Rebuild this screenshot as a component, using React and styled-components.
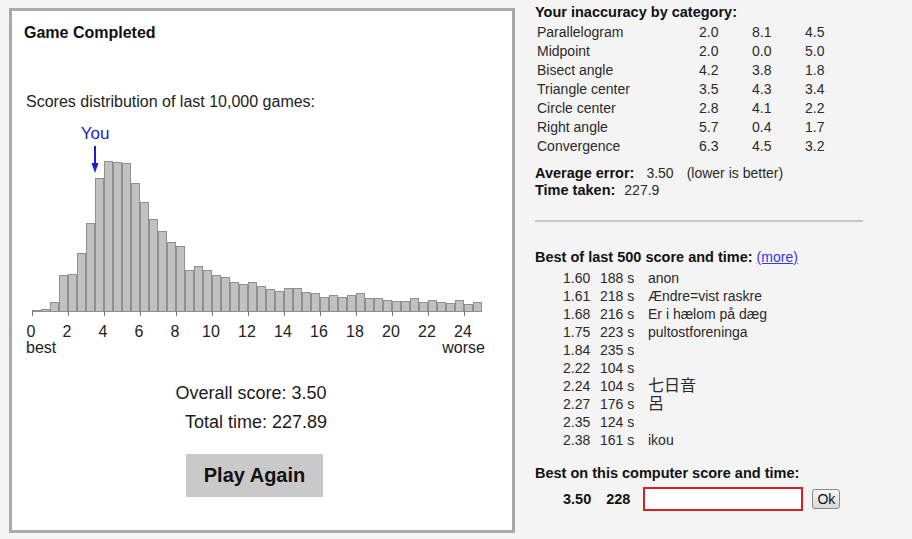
import React from "react";
import styled, { createGlobalStyle } from "styled-components";

const GlobalStyle = createGlobalStyle`
  body {
    margin: 0;
    background: #f4f4f4;
    font-family: "Liberation Sans", Arial, sans-serif;
    color: #222;
  }
`;

const Page = styled.div`
  display: flex;
  align-items: flex-start;
  gap: 20px;
  padding-left: 9px;
`;

const GamePanel = styled.div`
  margin-top: 8px;
  width: 506px;
  height: 525px;
  box-sizing: border-box;
  border: 3px solid #a9a9a9;
  background: #fff;
`;

const PanelTitle = styled.div`
  padding: 12px 0 0 12px;
  font-size: 16px;
  font-weight: bold;
  line-height: 20px;
  color: #111;
`;

const Caption = styled.div`
  margin-top: 49px;
  padding-left: 14px;
  font-size: 16px;
  line-height: 20px;
  color: #222;
`;

const Chart = styled.svg`
  display: block;
  margin-top: 8px;
  font-family: "Liberation Sans", Arial, sans-serif;
`;

const Results = styled.div`
  margin-top: 19px;
  padding-right: 22px;
  display: flex;
  flex-direction: column;
  align-items: center;
`;

const ResultLine = styled.div`
  font-size: 18px;
  line-height: 29px;
  color: #1a1a1a;
  padding-left: ${(p) => p.$shift || 0}px;
`;

const PlayButton = styled.button`
  margin: 17px 0 0 7px;
  width: 137px;
  height: 43px;
  border: none;
  background: #c9c9c9;
  font-family: "Liberation Sans", Arial, sans-serif;
  font-size: 20px;
  font-weight: bold;
  color: #111;
  cursor: pointer;
`;

const Side = styled.div`
  margin-top: 2px;
  width: 360px;
  font-size: 14px;
  color: #2a2a2a;
`;

const Heading = styled.div`
  font-size: 14.5px;
  font-weight: bold;
  line-height: ${(p) => p.$lh || 18}px;
  color: #111;
  margin-top: ${(p) => p.$top || 0}px;
`;

const StatsTable = styled.div`
  display: grid;
  grid-template-columns: 162px 53px 53px 53px;
  padding-left: 2px;
  line-height: 19px;
`;

const Summary = styled.div`
  margin-top: 9px;
  line-height: 17px;
`;

const Label = styled.span`
  font-size: 14.5px;
  font-weight: bold;
  color: #111;
`;

const Value = styled.span`
  margin-left: ${(p) => p.$gap}px;
`;

const Rule = styled.div`
  margin-top: 21px;
  width: 328px;
  height: 2px;
  background: #c6c6c6;
`;

const MoreLink = styled.a`
  font-weight: normal;
  font-size: 14px;
  color: #3535e8;
  text-decoration: underline;
`;

const BestList = styled.div`
  margin-top: 3px;
  padding-left: 28px;
  display: grid;
  grid-template-columns: 37px 48px auto;
  line-height: 18px;
  font-family: "Liberation Sans", Arial, "Noto Sans CJK JP", sans-serif;
`;

const Name = styled.span`
  font-size: ${(p) => (p.$cjk ? 16 : 14)}px;
`;

const LocalRow = styled.div`
  margin-top: 5px;
  padding-left: 28px;
  display: flex;
  align-items: center;
`;

const LocalValue = styled.span`
  font-size: 14.5px;
  font-weight: bold;
  color: #111;
  margin-right: ${(p) => p.$gap}px;
`;

const NameInput = styled.input`
  width: 160px;
  height: 24px;
  box-sizing: border-box;
  border: 2px solid #d12323;
  background: #fff;
  outline: none;
`;

const OkButton = styled.button`
  margin-left: 9px;
  width: 28px;
  height: 20px;
  padding: 0;
  border: 1px solid #8a8a8a;
  border-radius: 3px;
  background: linear-gradient(#f6f6f6, #dadada);
  font-family: "Liberation Sans", Arial, sans-serif;
  font-size: 14px;
  color: #111;
`;

const bars = [
  1, 2, 9, 36, 37, 58, 88, 133, 150, 149, 148, 128, 109, 92, 80, 69, 65, 41, 45,
  41, 36, 34, 29, 27, 29, 25, 22, 20, 23, 23, 19, 18, 14, 16, 14, 16, 18, 13, 13,
  11, 10, 10, 13, 9, 11, 9, 8, 11, 7, 9,
];

const categories = [
  ["Parallelogram", "2.0", "8.1", "4.5"],
  ["Midpoint", "2.0", "0.0", "5.0"],
  ["Bisect angle", "4.2", "3.8", "1.8"],
  ["Triangle center", "3.5", "4.3", "3.4"],
  ["Circle center", "2.8", "4.1", "2.2"],
  ["Right angle", "5.7", "0.4", "1.7"],
  ["Convergence", "6.3", "4.5", "3.2"],
];

const best = [
  ["1.60", "188 s", "anon"],
  ["1.61", "218 s", "Ændre=vist raskre"],
  ["1.68", "216 s", "Er i hælom på dæg"],
  ["1.75", "223 s", "pultostforeninga"],
  ["1.84", "235 s", ""],
  ["2.22", "104 s", ""],
  ["2.24", "104 s", "七日音", true],
  ["2.27", "176 s", "呂", true],
  ["2.35", "124 s", ""],
  ["2.38", "161 s", "ikou"],
];

const BASE = 311;
const X0 = 32;

function Histogram() {
  const ticks = [0, 2, 4, 6, 8, 10, 12, 14, 16, 18, 20, 22, 24];
  return (
    <Chart width="500" height="240" viewBox="12 120 500 240">
      <text x="95" y="139" textAnchor="middle" fontSize="17" fill="#1c1cd0">
        You
      </text>
      <line x1="95" y1="146" x2="95" y2="166" stroke="#1c1cd0" strokeWidth="2" />
      <polygon points="91.5,163 98.5,163 95,173" fill="#1c1cd0" />
      {bars.map((h, i) => (
        <rect
          key={i}
          x={X0 + i * 9 + 0.5}
          y={BASE - h + 0.5}
          width="8"
          height={h}
          fill="#c1c1c1"
          stroke="#8f8f8f"
          strokeWidth="1"
        />
      ))}
      {ticks.map((t) => (
        <g key={t}>
          <line
            x1={X0 + t * 18 + 0.5}
            y1={BASE}
            x2={X0 + t * 18 + 0.5}
            y2={BASE + 5}
            stroke="#777"
          />
          <text
            x={X0 + t * 18 - 1}
            y="337"
            textAnchor="middle"
            fontSize="16"
            fill="#222"
          >
            {t}
          </text>
        </g>
      ))}
      <text x="26" y="353" fontSize="16" fill="#222">
        best
      </text>
      <text x="485" y="353" textAnchor="end" fontSize="16" fill="#222">
        worse
      </text>
    </Chart>
  );
}

export default function App() {
  return (
    <>
      <GlobalStyle />
      <Page>
        <GamePanel>
          <PanelTitle>Game Completed</PanelTitle>
          <Caption>Scores distribution of last 10,000 games:</Caption>
          <Histogram />
          <Results>
            <ResultLine>Overall score: 3.50</ResultLine>
            <ResultLine $shift={10}>Total time: 227.89</ResultLine>
            <PlayButton>Play Again</PlayButton>
          </Results>
        </GamePanel>

        <Side>
          <Heading $lh={21}>Your inaccuracy by category:</Heading>
          <StatsTable>
            {categories.map((row) =>
              row.map((cell, j) => <span key={row[0] + j}>{cell}</span>)
            )}
          </StatsTable>
          <Summary>
            <div>
              <Label>Average error:</Label>
              <Value $gap={12}>3.50</Value>
              <Value $gap={13}>(lower is better)</Value>
            </div>
            <div>
              <Label>Time taken:</Label>
              <Value $gap={9}>227.9</Value>
            </div>
          </Summary>
          <Rule />
          <Heading $top={26}>
            Best of last 500 score and time: <MoreLink href="#">(more)</MoreLink>
          </Heading>
          <BestList>
            {best.map(([score, time, name, cjk]) => (
              <React.Fragment key={score}>
                <span>{score}</span>
                <span>{time}</span>
                <Name $cjk={cjk}>{name}</Name>
              </React.Fragment>
            ))}
          </BestList>
          <Heading $top={15}>Best on this computer score and time:</Heading>
          <LocalRow>
            <LocalValue $gap={15}>3.50</LocalValue>
            <LocalValue $gap={13}>228</LocalValue>
            <NameInput />
            <OkButton>Ok</OkButton>
          </LocalRow>
        </Side>
      </Page>
    </>
  );
}
